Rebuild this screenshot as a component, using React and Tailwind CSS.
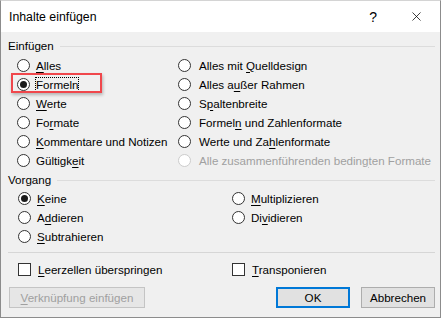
import { X } from "lucide-react";

const font = { fontFamily: '"Liberation Sans", Arial, sans-serif' };

// Beschriftung mit unterstrichener Zugriffstaste
const Label = ({ parts, disabled }) => (
  <span className={`whitespace-nowrap ${disabled ? "text-[#a0a0a0]" : "text-black"}`}>
    {parts[0]}
    <span className="underline underline-offset-2">{parts[1]}</span>
    {parts[2]}
  </span>
);

const Radio = ({ checked, disabled }) => (
  <span
    className={`flex h-[13px] w-[13px] shrink-0 items-center justify-center rounded-full border bg-white ${
      disabled ? "border-[#cccccc]" : "border-[#333333]"
    }`}
  >
    {checked && <span className="h-[7px] w-[7px] rounded-full bg-[#1a1a1a]" />}
  </span>
);

const RadioRow = ({ parts, checked, disabled, gap = "gap-[6px]", children }) => (
  <div className={`relative flex h-[19px] items-center ${gap}`}>
    <Radio checked={checked} disabled={disabled} />
    <Label parts={parts} disabled={disabled} />
    {children}
  </div>
);

const GroupHeader = ({ title, className = "" }) => (
  <div className={`flex h-[16px] items-center gap-[6px] ${className}`}>
    <span className="text-black">{title}</span>
    <div className="h-px flex-1 bg-[#dcdcdc]" />
  </div>
);

const Check = ({ parts }) => (
  <div className="flex h-[19px] items-center gap-[7px]">
    <span className="h-[13px] w-[13px] shrink-0 border border-[#333333] bg-white" />
    <Label parts={parts} />
  </div>
);

const App = () => {
  return (
    <div
      className="flex h-[318px] w-[441px] flex-col overflow-hidden border-x border-b border-t border-x-[#8c8c8c] border-b-[#8c8c8c] border-t-[#d4d4d4] bg-[#f0f0f0] text-[11.6px] leading-[16px]"
      style={font}
    >
      {/* Titelleiste */}
      <div className="flex h-[31px] shrink-0 items-center bg-white pl-[8px]">
        <span className="flex-1 text-[12.3px] text-black">Inhalte einfügen</span>
        <span className="mr-[32px] text-[14px] text-black">?</span>
        <X size={15} strokeWidth={1.2} className="mr-[16px] text-black" />
      </div>

      <div className="flex flex-1 flex-col pl-[7px] pr-[5px] pt-[6px]">
        <GroupHeader title="Einfügen" />

        <div className="mt-[2px] grid grid-cols-[161px_1fr] pl-[9px]">
          <div className="flex flex-col">
            <RadioRow parts={["", "A", "lles"]} />
            <RadioRow parts={["", "F", "ormeln"]} checked>
              {/* Fokusrahmen */}
              <span className="pointer-events-none absolute left-[18px] top-[2px] h-[15px] w-[44px] border border-dotted border-black" />
              {/* rote Markierung */}
              <span className="pointer-events-none absolute left-[-6px] top-[-2px] h-[20px] w-[91px] border-2 border-[#f0474c] shadow-[1px_2px_3px_rgba(0,0,0,0.25)]" />
            </RadioRow>
            <RadioRow parts={["", "W", "erte"]} />
            <RadioRow parts={["Fo", "r", "mate"]} />
            <RadioRow parts={["", "K", "ommentare und Notizen"]} />
            <RadioRow parts={["Gültigk", "e", "it"]} />
          </div>
          <div className="flex flex-col">
            <RadioRow gap="gap-[8px]" parts={["Alles mit ", "Q", "uelldesign"]} />
            <RadioRow gap="gap-[8px]" parts={["Alles a", "u", "ßer Rahmen"]} />
            <RadioRow gap="gap-[8px]" parts={["S", "p", "altenbreite"]} />
            <RadioRow gap="gap-[8px]" parts={["Formel", "n", " und Zahlenformate"]} />
            <RadioRow gap="gap-[8px]" parts={["Werte und Za", "h", "lenformate"]} />
            <RadioRow gap="gap-[8px]" parts={["Alle zusammenführenden bedin", "g", "ten Formate"]} disabled />
          </div>
        </div>

        <GroupHeader title="Vorgang" className="mt-[2px]" />

        <div className="mt-[1px] grid grid-cols-[214px_1fr] pl-[10px]">
          <div className="flex flex-col">
            <RadioRow parts={["", "K", "eine"]} checked />
            <RadioRow parts={["A", "d", "dieren"]} />
            <RadioRow parts={["", "S", "ubtrahieren"]} />
          </div>
          <div className="flex flex-col">
            <RadioRow parts={["", "M", "ultiplizieren"]} />
            <RadioRow parts={["Di", "v", "idieren"]} />
          </div>
        </div>

        <div className="mt-[6px] h-px bg-[#d6d6d6]" />

        <div className="mt-[7px] grid grid-cols-[214px_1fr] pl-[10px]">
          <Check parts={["", "L", "eerzellen überspringen"]} />
          <Check parts={["", "T", "ransponieren"]} />
        </div>

        {/* Schaltflächen */}
        <div className="mt-[8px] flex items-center pl-[1px]">
          <button className="h-[21px] w-[136px] border border-[#c4c4c4] bg-[#e6e6e6] text-[#a0a0a0]">
            <span className="underline underline-offset-2">V</span>erknüpfung einfügen
          </button>
          <div className="flex-1" />
          <button className="h-[21px] w-[74px] border-2 border-[#0078d7] bg-[#e1e1e1] text-black">
            OK
          </button>
          <button className="ml-[11px] h-[21px] w-[74px] border border-[#adadad] bg-[#e1e1e1] text-black">
            Abbrechen
          </button>
        </div>
      </div>
    </div>
  );
};

export default App;
